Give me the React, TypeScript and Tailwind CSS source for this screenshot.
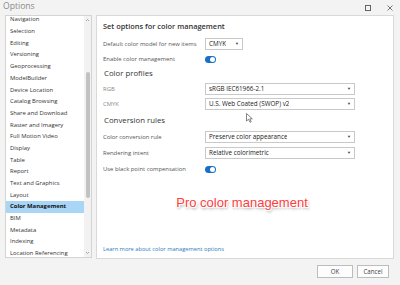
import React from 'react';

const categories = [
  'Navigation',
  'Selection',
  'Editing',
  'Versioning',
  'Geoprocessing',
  'ModelBuilder',
  'Device Location',
  'Catalog Browsing',
  'Share and Download',
  'Raster and Imagery',
  'Full Motion Video',
  'Display',
  'Table',
  'Report',
  'Text and Graphics',
  'Layout',
  'Color Management',
  'BIM',
  'Metadata',
  'Indexing',
  'Location Referencing',
];

const Select = ({ value, width }: { value: string; width: string }) => (
  <div
    className={`${width} h-[12px] bg-white border border-[#c9c9c9] flex items-center justify-between pl-[3px] pr-[3px] text-[6.3px] text-[#222]`}
  >
    <span className="truncate">{value}</span>
    <span className="text-[4px] text-[#444]">▼</span>
  </div>
);

const Toggle = () => (
  <div className="w-[11px] h-[7px] rounded-full bg-[#1a6fc4] flex items-center justify-end pr-[1px]">
    <div className="w-[5px] h-[5px] rounded-full bg-white" />
  </div>
);

const Row = ({ label, children, dim }: { label: string; children: React.ReactNode; dim?: boolean }) => (
  <div className="flex items-center h-[12px]">
    <div className={`w-[102px] text-[5.9px] ${dim ? 'text-[#8a8a8a]' : 'text-[#555]'}`}>{label}</div>
    {children}
  </div>
);

export default function App() {
  return (
    <div
      className="w-[400px] h-[285px] bg-[#f3f3f3] flex flex-col overflow-hidden"
      style={{ fontFamily: '"Open Sans", "Noto Sans", sans-serif' }}
    >
      {/* Title bar */}
      <div className="h-[15px] flex items-start justify-between pl-[3px] pr-[7px]">
        <span className="text-[8.6px] leading-[15px] text-[#8a8a8a] -mt-[1px]">Options</span>
        <div className="flex items-center gap-[16px] pt-[5px]">
          <div className="w-[6px] h-[6px] border border-[#666]" />
          <svg width="6" height="6" viewBox="0 0 6 6" className="stroke-[#555]">
            <path d="M0.5 0.5L5.5 5.5M5.5 0.5L0.5 5.5" strokeWidth="0.8" />
          </svg>
        </div>
      </div>

      {/* Body */}
      <div className="flex gap-[4px] pl-[5px] pr-[6px] h-[244px]">
        {/* Category list */}
        <div className="w-[87px] h-[243px] bg-white border border-[#d4d4d4] flex overflow-hidden">
          <div className="flex-1 overflow-hidden">
            <div className="-mt-[2px] flex flex-col">
              {categories.map((c) => (
                <div
                  key={c}
                  className={`h-[11.7px] flex items-center pl-[4px] text-[5.9px] whitespace-nowrap ${
                    c === 'Color Management' ? 'bg-[#a9d5f7] font-bold text-[#111]' : 'text-[#333]'
                  }`}
                >
                  {c}
                </div>
              ))}
            </div>
          </div>
          <div className="w-[7px] bg-[#f2f2f2] flex flex-col items-center justify-between py-[2px]">
            <svg width="5" height="4" viewBox="0 0 5 4">
              <path d="M1 3L2.5 1.5L4 3" fill="none" stroke="#888" strokeWidth="0.7" />
            </svg>
            <div className="flex-1 w-full flex flex-col items-center pt-[50px] pb-[53px]">
              <div className="w-[4px] flex-1 rounded-full bg-[#c2c2c2]" />
            </div>
            <svg width="5" height="4" viewBox="0 0 5 4">
              <path d="M1 1L2.5 2.5L4 1" fill="none" stroke="#888" strokeWidth="0.7" />
            </svg>
          </div>
        </div>

        {/* Settings panel */}
        <div className="flex-1 h-[244px] bg-white border border-[#d9d9d9] flex flex-col pl-[6px] pt-[4px] pb-[4px] relative">
          <div className="h-[14px] flex items-center text-[7.4px] font-semibold text-[#333]">
            Set options for color management
          </div>
          <div className="flex flex-col gap-[3px] mt-[4px]">
            <Row label="Default color model for new items">
              <Select value="CMYK" width="w-[38px]" />
            </Row>
            <Row label="Enable color management">
              <Toggle />
            </Row>
          </div>
          <div className="h-[14px] mt-[2px] pl-[1px] flex items-center text-[7.8px] font-medium text-[#333]">
            Color profiles
          </div>
          <div className="flex flex-col gap-[3px] mt-[2px]">
            <Row label="RGB" dim>
              <Select value="sRGB IEC61966-2.1" width="w-[150px]" />
            </Row>
            <Row label="CMYK" dim>
              <Select value="U.S. Web Coated (SWOP) v2" width="w-[150px]" />
            </Row>
          </div>
          <div className="h-[14px] mt-[4px] pl-[1px] flex items-center text-[7.8px] font-medium text-[#333]">
            Conversion rules
          </div>
          <div className="flex flex-col gap-[4px] mt-[3px]">
            <Row label="Color conversion rule">
              <Select value="Preserve color appearance" width="w-[150px]" />
            </Row>
            <Row label="Rendering intent">
              <Select value="Relative colorimetric" width="w-[150px]" />
            </Row>
            <Row label="Use black point compensation">
              <Toggle />
            </Row>
          </div>
          <div className="flex-1 flex items-center justify-center pb-[14px] pr-[12px]">
            <span
              className="text-[13px] text-[#ff3d3d] [text-shadow:1px_1px_0_#fff,-1px_-1px_0_#fff,1px_-1px_0_#fff,-1px_1px_0_#fff,1px_2px_3px_rgba(0,0,0,0.45)]"
              style={{ fontFamily: '"Liberation Sans", Arial, sans-serif' }}
            >
              Pro color management
            </span>
          </div>
          <div className="text-[5.7px] text-[#2c7cc0] leading-[10px]">Learn more about color management options</div>

          {/* mouse pointer */}
          <svg width="7" height="10" viewBox="0 0 7 10" className="absolute left-[149px] top-[97px]">
            <path d="M0.5 0.5V8L2.5 6.3L4 9.3L5.2 8.7L3.8 5.8H6.3Z" fill="#fff" stroke="#333" strokeWidth="0.6" />
          </svg>
        </div>
      </div>

      {/* Footer */}
      <div className="flex-1 flex items-center justify-end gap-[4px] pr-[11px] pb-[1px]">
        <div className="w-[36px] h-[13px] bg-[#fdfdfd] border border-[#bdbdbd] flex items-center justify-center text-[6.2px] text-[#444]">
          OK
        </div>
        <div className="w-[32px] h-[13px] bg-[#fdfdfd] border border-[#bdbdbd] flex items-center justify-center text-[6.2px] text-[#444]">
          Cancel
        </div>
      </div>
    </div>
  );
}
